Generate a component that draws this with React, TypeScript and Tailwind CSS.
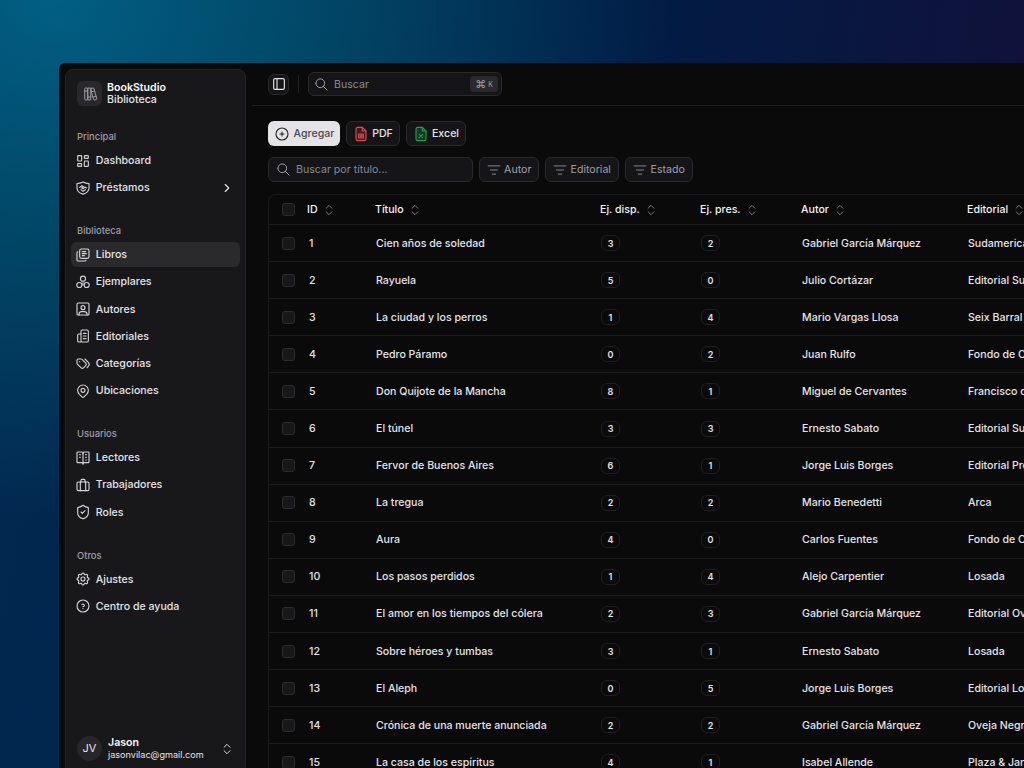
import React from 'react';
import {
  TbBooks, TbLayoutDashboard, TbChevronRight, TbLibrary, TbUserSquare,
  TbTags, TbMapPin, TbVocabulary, TbSettings, TbHelpCircle,
  TbLayoutSidebar, TbSearch, TbCirclePlus,
} from 'react-icons/tb';
import { ChevronsUpDown, ListFilter, ShieldCheck } from 'lucide-react';

type IconProps = { className?: string };

const line = { fill: 'none', stroke: 'currentColor', strokeWidth: 1.7, strokeLinecap: 'round', strokeLinejoin: 'round' } as const;

const LoanIcon = ({ className }: IconProps) => (
  <svg viewBox="0 0 24 24" className={className} {...line}>
    <path d="M12 3c3 1.6 5.6 2.2 9 2.2V12c0 4.6-3.6 7.7-9 9.2C6.600 19.700 3 16.600 3 12V5.200C6.400 5.200 9 4.600 12 3z" />
    <path d="M7 11l3.500-2.500 2 1.500-2.500 2 2 1 3-2.500 2 1.500M9 14.500l3 2.500 3.500-2.500" />
  </svg>
);

const CopiesIcon = ({ className }: IconProps) => (
  <svg viewBox="0 0 24 24" className={className} {...line}>
    <circle cx="12" cy="7" r="3.800" />
    <circle cx="6.500" cy="16.500" r="3.800" />
    <circle cx="17.500" cy="16.500" r="3.800" />
    <path d="M12 13v3.500" />
  </svg>
);

const PublisherIcon = ({ className }: IconProps) => (
  <svg viewBox="0 0 24 24" className={className} {...line}>
    <rect x="9" y="3" width="11" height="18" rx="2" />
    <path d="M9 9H6a2 2 0 0 0-2 2v8a2 2 0 0 0 2 2h3M12.500 8h4M12.500 12h4M12.500 16h4" />
  </svg>
);

const WorkersIcon = ({ className }: IconProps) => (
  <svg viewBox="0 0 24 24" className={className} {...line}>
    <rect x="3" y="7.500" width="18" height="13" rx="2" />
    <path d="M8 7.500v13M16 7.500v13M9 7.500V5a1.500 1.500 0 0 1 1.500-1.500h3A1.500 1.500 0 0 1 15 5v2.500" />
  </svg>
);

const RolesIcon = ({ className }: IconProps) => <ShieldCheck strokeWidth={1.7} className={className} />;

const PdfIcon = ({ className }: IconProps) => (
  <svg viewBox="0 0 24 24" className={className} {...line}>
    <path d="M14 2H7a2.500 2.500 0 0 0-2.500 2.500v15A2.500 2.500 0 0 0 7 22h10a2.500 2.500 0 0 0 2.500-2.500V7.500z" fill="rgba(239,68,68,0.18)" />
    <path d="M14 2v5.500h5.500M8.500 12h7v6h-7zM8.500 15h7M12 12v6" />
  </svg>
);

const ExcelIcon = ({ className }: IconProps) => (
  <svg viewBox="0 0 24 24" className={className} {...line}>
    <path d="M14 2H7a2.500 2.500 0 0 0-2.500 2.500v15A2.500 2.500 0 0 0 7 22h10a2.500 2.500 0 0 0 2.500-2.500V7.500z" fill="rgba(34,197,94,0.2)" />
    <path d="M14 2v5.500h5.500M9.500 12.500l5 5M14.500 12.500l-5 5" />
  </svg>
);

interface NavItem {
  label: string;
  icon: React.ComponentType<IconProps>;
  active?: boolean;
  chevron?: boolean;
}

const navGroups: { title: string; items: NavItem[] }[] = [
  {
    title: 'Principal',
    items: [
      { label: 'Dashboard', icon: TbLayoutDashboard },
      { label: 'Préstamos', icon: LoanIcon, chevron: true },
    ],
  },
  {
    title: 'Biblioteca',
    items: [
      { label: 'Libros', icon: TbLibrary, active: true },
      { label: 'Ejemplares', icon: CopiesIcon },
      { label: 'Autores', icon: TbUserSquare },
      { label: 'Editoriales', icon: PublisherIcon },
      { label: 'Categorías', icon: TbTags },
      { label: 'Ubicaciones', icon: TbMapPin },
    ],
  },
  {
    title: 'Usuarios',
    items: [
      { label: 'Lectores', icon: TbVocabulary },
      { label: 'Trabajadores', icon: WorkersIcon },
      { label: 'Roles', icon: RolesIcon },
    ],
  },
  {
    title: 'Otros',
    items: [
      { label: 'Ajustes', icon: TbSettings },
      { label: 'Centro de ayuda', icon: TbHelpCircle },
    ],
  },
];

const books: [number, string, number, number, string, string][] = [
  [1, 'Cien años de soledad', 3, 2, 'Gabriel García Márquez', 'Sudamericana'],
  [2, 'Rayuela', 5, 0, 'Julio Cortázar', 'Editorial Sudamericana'],
  [3, 'La ciudad y los perros', 1, 4, 'Mario Vargas Llosa', 'Seix Barral'],
  [4, 'Pedro Páramo', 0, 2, 'Juan Rulfo', 'Fondo de Cultura'],
  [5, 'Don Quijote de la Mancha', 8, 1, 'Miguel de Cervantes', 'Francisco de Robles'],
  [6, 'El túnel', 3, 3, 'Ernesto Sabato', 'Editorial Sudamericana'],
  [7, 'Fervor de Buenos Aires', 6, 1, 'Jorge Luis Borges', 'Editorial Proa'],
  [8, 'La tregua', 2, 2, 'Mario Benedetti', 'Arca'],
  [9, 'Aura', 4, 0, 'Carlos Fuentes', 'Fondo de Cultura'],
  [10, 'Los pasos perdidos', 1, 4, 'Alejo Carpentier', 'Losada'],
  [11, 'El amor en los tiempos del cólera', 2, 3, 'Gabriel García Márquez', 'Editorial Oveja Negra'],
  [12, 'Sobre héroes y tumbas', 3, 1, 'Ernesto Sabato', 'Losada'],
  [13, 'El Aleph', 0, 5, 'Jorge Luis Borges', 'Editorial Losada'],
  [14, 'Crónica de una muerte anunciada', 2, 2, 'Gabriel García Márquez', 'Oveja Negra'],
  [15, 'La casa de los espíritus', 4, 1, 'Isabel Allende', 'Plaza & Janés'],
];

const gridCols = 'grid grid-cols-[25px_68px_225px_100px_101px_166px_200px] items-center';

const Checkbox = () => <span className="block h-[13px] w-[13px] rounded-[3px] border border-[#2c2c2f] bg-[#18181a]" />;

const Count = ({ value }: { value: number }) => (
  <span className="flex h-[16px] w-[19px] items-center justify-center rounded-[6px] border border-[#1f1f22] text-[9px] font-semibold text-[#e4e4e7]">
    {value}
  </span>
);

const HeaderCell = ({ label }: { label: string }) => (
  <span className="flex items-center gap-[3px] whitespace-nowrap font-medium text-[#f4f4f5]">
    {label}
    <ChevronsUpDown size={14} strokeWidth={1.3} className="ml-[1px] text-[#a1a1aa]" />
  </span>
);

const FilterButton = ({ label, width }: { label: string; width: string }) => (
  <button className={`flex h-[25px] items-center justify-center gap-[3.500px] rounded-[6px] border border-[#2a2a2d] bg-[#151517] text-[#9f9fa9] ${width}`}>
    <ListFilter size={14} strokeWidth={1.4} />
    {label}
  </button>
);

const App: React.FC = () => {
  return (
    <div className="h-screen overflow-hidden bg-[radial-gradient(ellipse_620px_520px_at_5%_0%,#015f84_0%,rgba(1,78,108,0.8)_45%,rgba(1,60,90,0)_100%),linear-gradient(100deg,#022a52_0%,#011c45_55%,#150f38_100%)] pl-[59px] pt-[63px] font-['Inter',sans-serif] text-[10.6px] leading-[17px] text-[#e4e4e7]">
      <div className="flex h-[717px] w-[1100px] rounded-tl-[6px] bg-[#0a0a0b]">
        <aside className="m-[6px] flex w-[181px] shrink-0 flex-col rounded-[8px] border border-[#242427] bg-[#18181a] px-[5px] pb-[12px] pt-[11px]">
          <div className="flex h-[25px] items-center gap-[5px] px-[6px]">
            <span className="flex h-[25px] w-[25px] items-center justify-center rounded-[6px] bg-[#29292b]">
              <TbBooks size={18} strokeWidth={1.3} className="text-[#a1a1aa]" />
            </span>
            <div className="pt-[1px] leading-[12px]">
              <p className="font-semibold text-[#fafafa]">BookStudio</p>
              <p className="font-medium">Biblioteca</p>
            </div>
          </div>

          <nav className="mt-[18px] flex flex-col gap-[18px]">
            {navGroups.map(group => (
              <div key={group.title}>
                <p className="flex h-[24px] items-center px-[6px] pt-[1px] text-[9.4px] font-medium text-[#9f9fa9]">{group.title}</p>
                <div className="flex flex-col gap-[2.200px]">
                  {group.items.map(item => (
                    <a
                      key={item.label}
                      className={`flex h-[25px] items-center gap-[6px] rounded-[6px] px-[6px] font-medium ${item.active ? 'bg-[#2a2a2c]' : ''}`}
                    >
                      <item.icon className="-mx-[1.600px] h-[16px] w-[16px] shrink-0 text-[#d4d4d8] [stroke-width:1.7]" />
                      <span>{item.label}</span>
                      {item.chevron && <TbChevronRight size={14} className="ml-auto" />}
                    </a>
                  ))}
                </div>
              </div>
            ))}
          </nav>

          <div className="mt-auto flex items-center gap-[6px] px-[6px]">
            <span className="flex h-[25px] w-[25px] items-center justify-center rounded-full bg-[#27272a] text-[11px]">JV</span>
            <div className="leading-[12px]">
              <p className="font-semibold text-[#fafafa]">Jason</p>
              <p className="text-[9.100px]">jasonvilac@gmail.com</p>
            </div>
            <ChevronsUpDown size={14} strokeWidth={1.6} className="ml-auto" />
          </div>
        </aside>

        <main className="min-w-0 flex-1">
          <header className="flex h-[43px] items-center border-b border-[#1f1f22] pl-[16px]">
            <button className="flex h-[21px] w-[21px] items-center justify-center rounded-[6px] border border-[#2a2a2d] bg-[#151517]">
              <TbLayoutSidebar size={16} strokeWidth={1.7} />
            </button>
            <span className="mx-[9px] h-[18px] w-px bg-[#1f1f22]" />
            <div className="flex h-[24px] w-[194px] items-center gap-[5px] rounded-[6px] border border-[#2a2a2d] bg-[#151517] pl-[5px] pr-[3px] text-[#858996]">
              <TbSearch size={15} strokeWidth={1.6} className="text-[#a1a1aa]" />
              <span>Buscar</span>
              <kbd className="ml-auto flex h-[16px] w-[28px] items-center justify-center gap-[2px] rounded-[4px] bg-[#2a2a2d] font-['Inter',sans-serif] text-[11px] text-[#9f9fa9]">
                ⌘<span className="text-[7px]">K</span>
              </kbd>
            </div>
          </header>

          <div className="pl-[16px] pt-[15px]">
            <div className="flex gap-[6px]">
              <button className="flex h-[25px] w-[72px] items-center justify-center gap-[4px] rounded-[6px] bg-[#e4e4e7] font-medium text-[#4a4a52]">
                <TbCirclePlus size={16} strokeWidth={1.7} className="text-[#27272a]" />
                Agregar
              </button>
              <button className="flex h-[25px] w-[54px] items-center justify-center gap-[3px] rounded-[6px] border border-[#2a2a2d] bg-[#151517] font-medium">
                <PdfIcon className="h-[16px] w-[16px] text-[#dc4a52]" />
                PDF
              </button>
              <button className="flex h-[25px] w-[60px] items-center justify-center gap-[3px] rounded-[6px] border border-[#2a2a2d] bg-[#151517] font-medium">
                <ExcelIcon className="h-[16px] w-[16px] text-[#16a34a]" />
                Excel
              </button>
            </div>

            <div className="mt-[11px] flex gap-[6px]">
              <div className="flex h-[25px] w-[205px] items-center gap-[5px] rounded-[6px] border border-[#2a2a2d] bg-[#151517] px-[7px] text-[#858996]">
                <TbSearch size={15} strokeWidth={1.6} className="text-[#a1a1aa]" />
                <span>Buscar por título...</span>
              </div>
              <FilterButton label="Autor" width="w-[60px]" />
              <FilterButton label="Editorial" width="w-[74px]" />
              <FilterButton label="Estado" width="w-[68px]" />
            </div>

            <div className="mt-[12px] rounded-tl-[8px] border-l border-t border-[#1a1a1d]">
              <div className={`${gridCols} h-[30px] border-b border-[#1c1c1f] pl-[13px]`}>
                <Checkbox />
                <HeaderCell label="ID" />
                <HeaderCell label="Título" />
                <HeaderCell label="Ej. disp." />
                <HeaderCell label="Ej. pres." />
                <HeaderCell label="Autor" />
                <HeaderCell label="Editorial" />
              </div>
              {books.map(([id, title, available, loaned, author, publisher]) => (
                <div key={id} className={`${gridCols} h-[37.100px] border-b border-[#1c1c1f] pl-[13px] font-medium`}>
                  <Checkbox />
                  <span className="pl-[2px]">{id}</span>
                  <span className="pl-px">{title}</span>
                  <span className="pl-px"><Count value={available} /></span>
                  <span className="pl-px"><Count value={loaned} /></span>
                  <span className="pl-px">{author}</span>
                  <span className="whitespace-nowrap pl-px">{publisher}</span>
                </div>
              ))}
            </div>
          </div>
        </main>
      </div>
    </div>
  );
};

export default App;
